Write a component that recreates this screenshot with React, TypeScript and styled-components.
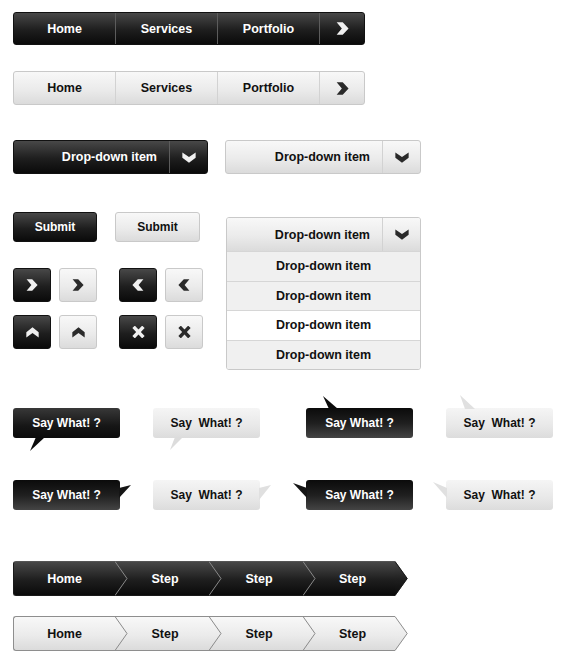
import React from "react";
import styled, { createGlobalStyle, css } from "styled-components";

const GlobalStyle = createGlobalStyle`
  html, body { margin: 0; padding: 0; background: #fff; }
  body { font-family: "Liberation Sans", Arial, sans-serif; }
`;

type Tone = "dark" | "light";

const darkBg = "linear-gradient(to bottom, #484848 0%, #1e1e1e 55%, #0a0a0a 100%)";
const lightBg = "linear-gradient(to bottom, #f8f8f8 0%, #ebebeb 55%, #dbdbdb 100%)";

const toneCss = (tone: Tone) =>
  tone === "dark"
    ? css`
        background: ${darkBg};
        color: #fff;
        border: 1px solid #111;
      `
    : css`
        background: ${lightBg};
        color: #111;
        border: 1px solid #c9c9c9;
      `;

const divider = (tone: Tone) => (tone === "dark" ? "#5c5c5c" : "#d2d2d2");
const iconColor = (tone: Tone) => (tone === "dark" ? "#f0f0f0" : "#2a2a2a");

const Page = styled.div`
  width: 564px;
  box-sizing: border-box;
  padding: 12px 0 12px 13px;
  display: flex;
  flex-direction: column;
`;

/* ---------- nav bars ---------- */
const NavBar = styled.nav<{ $tone: Tone; $top: number }>`
  display: flex;
  width: 352px;
  height: ${(p) => (p.$tone === "dark" ? 33 : 34)}px;
  margin-top: ${(p) => p.$top}px;
  box-sizing: border-box;
  border-radius: 3px;
  overflow: hidden;
  ${(p) => toneCss(p.$tone)}
`;

const NavItem = styled.div<{ $tone: Tone }>`
  width: 102px;
  box-sizing: border-box;
  border-right: 1px solid ${(p) => divider(p.$tone)};
  display: flex;
  align-items: center;
  justify-content: center;
  font-weight: bold;
  font-size: 12.5px;
`;

const NavArrow = styled.div`
  flex: 1;
  display: flex;
  align-items: center;
  justify-content: center;
`;

/* ---------- icons ---------- */
const rotations = { right: 0, down: 90, left: 180, up: 270 };

const Chevron = ({
  dir,
  color,
  w = 12,
  h = 12,
}: {
  dir: "right" | "down" | "left" | "up";
  color: string;
  w?: number;
  h?: number;
}) => (
  <svg width={w} height={h} viewBox="0 0 12 12" preserveAspectRatio="none">
    <polygon
      points="0.6,0.3 6.2,0.3 11.6,6 6.2,11.7 0.6,11.7 5.4,6"
      fill={color}
      transform={`rotate(${rotations[dir]} 6 6)`}
    />
  </svg>
);

const Cross = ({ color }: { color: string }) => (
  <svg width={13} height={12} viewBox="0 0 13 12">
    <path d="M1.6 0.8 L11.4 11.2 M11.4 0.8 L1.6 11.2" stroke={color} strokeWidth={3.4} fill="none" />
  </svg>
);

/* ---------- dropdowns ---------- */
const DropRow = styled.div`
  display: flex;
  gap: 17px;
  margin-top: 35px;
`;

const Select = styled.div<{ $tone: Tone; $w: number }>`
  display: flex;
  width: ${(p) => p.$w}px;
  height: 34px;
  box-sizing: border-box;
  border-radius: 3px;
  overflow: hidden;
  ${(p) => toneCss(p.$tone)}
`;

const SelectLabel = styled.div`
  flex: 1;
  display: flex;
  align-items: center;
  justify-content: flex-end;
  padding-right: 12px;
  font-weight: bold;
  font-size: 12.5px;
`;

const SelectButton = styled.div<{ $tone: Tone }>`
  width: 38px;
  box-sizing: border-box;
  border-left: 1px solid ${(p) => divider(p.$tone)};
  display: flex;
  align-items: center;
  justify-content: center;
`;

/* ---------- middle ---------- */
const Middle = styled.div`
  display: flex;
  margin-top: 38px;
`;

const LeftCol = styled.div`
  width: 191px;
  display: flex;
  flex-direction: column;
`;

const RightCol = styled.div`
  margin-left: 22px;
  padding-top: 5px;
`;

const SubmitRow = styled.div`
  display: flex;
  gap: 18px;
`;

const SubmitButton = styled.button<{ $tone: Tone }>`
  width: ${(p) => (p.$tone === "dark" ? 84 : 85)}px;
  height: 30px;
  box-sizing: border-box;
  border-radius: 3px;
  font-family: inherit;
  font-weight: bold;
  font-size: 12px;
  padding: 0;
  ${(p) => toneCss(p.$tone)}
`;

const IconGrid = styled.div`
  display: flex;
  flex-direction: column;
  gap: 13px;
  margin-top: 26px;
`;

const IconRow = styled.div`
  display: flex;
  gap: 22px;
`;

const IconPair = styled.div`
  display: flex;
  gap: 8px;
`;

const IconButton = styled.button<{ $tone: Tone }>`
  width: 38px;
  height: 34px;
  box-sizing: border-box;
  border-radius: 3px;
  padding: 0;
  display: flex;
  align-items: center;
  justify-content: center;
  ${(p) => toneCss(p.$tone)}
`;

const DropList = styled.div`
  width: 195px;
  box-sizing: border-box;
  border: 1px solid #c9c9c9;
  border-radius: 3px;
  overflow: hidden;
`;

const DropHeader = styled.div`
  display: flex;
  height: 33px;
  background: ${lightBg};
  color: #111;
`;

const DropItem = styled.div<{ $active?: boolean }>`
  height: 29.5px;
  box-sizing: border-box;
  border-top: 1px solid #d6d6d6;
  background: ${(p) => (p.$active ? "#fff" : "#f0f0f0")};
  display: flex;
  align-items: center;
  justify-content: center;
  font-weight: bold;
  font-size: 12.5px;
  color: #111;
`;

/* ---------- speech bubbles ---------- */
const BubbleRow = styled.div<{ $top: number }>`
  display: flex;
  gap: 46px;
  margin-top: ${(p) => p.$top}px;
`;

const BubblePair = styled.div`
  display: flex;
  gap: 33px;
`;

const Bubble = styled.div<{ $tone: Tone; $invert?: boolean }>`
  position: relative;
  width: 107px;
  height: 30px;
  box-sizing: border-box;
  border-radius: 3px;
  display: flex;
  align-items: center;
  justify-content: center;
  font-weight: bold;
  font-size: 12px;
  white-space: pre;
  ${(p) =>
    p.$tone === "dark"
      ? css`
          color: #fff;
          background: ${p.$invert
            ? "linear-gradient(to bottom, #0b0b0b 0%, #1f1f1f 50%, #444 100%)"
            : "linear-gradient(to bottom, #383838 0%, #161616 60%, #0b0b0b 100%)"};
        `
      : css`
          color: #111;
          background: linear-gradient(to bottom, #f5f5f5 0%, #e8e8e8 60%, #dcdcdc 100%);
        `}
`;

const Tail = styled.svg`
  position: absolute;
  left: 0;
  top: 0;
  overflow: visible;
  pointer-events: none;
`;

const SpeechBubble = ({
  tone,
  invert,
  text,
  tail,
  tailColor,
}: {
  tone: Tone;
  invert?: boolean;
  text: string;
  tail: string;
  tailColor: string;
}) => (
  <Bubble $tone={tone} $invert={invert}>
    <Tail width={107} height={30} viewBox="0 0 107 30">
      <polygon points={tail} fill={tailColor} />
    </Tail>
    {text}
  </Bubble>
);

/* ---------- steps ---------- */
const StepTrack = styled.div<{ $top: number }>`
  display: flex;
  margin-top: ${(p) => p.$top}px;
`;

const StepBody = styled.div<{ $tone: Tone }>`
  display: flex;
  width: 382px;
  height: 35px;
  box-sizing: border-box;
  border-radius: 3px 0 0 3px;
  ${(p) =>
    p.$tone === "dark"
      ? css`
          background: ${darkBg};
          color: #fff;
          border: 1px solid #1a1a1a;
          border-top-color: #555;
        `
      : css`
          background: ${lightBg};
          color: #111;
          border: 1px solid #8e8e8e;
        `}
  border-right: none;
`;

const StepSeg = styled.div<{ $w: number; $shift?: number }>`
  width: ${(p) => p.$w}px;
  flex-shrink: 0;
  box-sizing: border-box;
  padding-right: ${(p) => p.$shift ?? 0}px;
  display: flex;
  align-items: center;
  justify-content: center;
  font-weight: bold;
  font-size: 12.5px;
`;

const StepSepSvg = styled.svg`
  flex-shrink: 0;
  display: block;
  margin-top: -1px;
`;

const StepSep = ({ color }: { color: string }) => (
  <StepSepSvg width={13} height={35} viewBox="0 0 13 35">
    <polyline points="0,0.5 12,17.5 0,34.5" fill="none" stroke={color} strokeWidth={1} />
  </StepSepSvg>
);

const StepTip = ({ tone }: { tone: Tone }) => {
  const id = `tipgrad-${tone}`;
  const stops =
    tone === "dark"
      ? ["#484848", "#1e1e1e", "#0a0a0a"]
      : ["#f8f8f8", "#ebebeb", "#dbdbdb"];
  const stroke = tone === "dark" ? "#1a1a1a" : "#8e8e8e";
  return (
    <svg width={13} height={35} viewBox="0 0 13 35" style={{ display: "block", flexShrink: 0 }}>
      <defs>
        <linearGradient id={id} x1="0" y1="0" x2="0" y2="1">
          <stop offset="0" stopColor={stops[0]} />
          <stop offset="0.55" stopColor={stops[1]} />
          <stop offset="1" stopColor={stops[2]} />
        </linearGradient>
      </defs>
      <polygon points="0,0 12.5,17.5 0,35" fill={`url(#${id})`} />
      <polyline points="0,0.5 12.2,17.5 0,34.5" fill="none" stroke={stroke} strokeWidth={1} />
    </svg>
  );
};

const Steps = ({ tone, top }: { tone: Tone; top: number }) => {
  const sep = "#8a8a8a";
  return (
    <StepTrack $top={top}>
      <StepBody $tone={tone}>
        <StepSeg $w={101}>Home</StepSeg>
        <StepSep color={sep} />
        <StepSeg $w={81} $shift={7}>Step</StepSeg>
        <StepSep color={sep} />
        <StepSeg $w={81} $shift={7}>Step</StepSeg>
        <StepSep color={sep} />
        <StepSeg $w={81} $shift={8}>Step</StepSeg>
      </StepBody>
      <StepTip tone={tone} />
    </StepTrack>
  );
};

const Nav = ({ tone, top }: { tone: Tone; top: number }) => (
  <NavBar $tone={tone} $top={top}>
    <NavItem $tone={tone}>Home</NavItem>
    <NavItem $tone={tone}>Services</NavItem>
    <NavItem $tone={tone}>Portfolio</NavItem>
    <NavArrow>
      <Chevron dir="right" color={iconColor(tone)} w={13} h={13} />
    </NavArrow>
  </NavBar>
);

const Dropdown = ({ tone, w }: { tone: Tone; w: number }) => (
  <Select $tone={tone} $w={w}>
    <SelectLabel>Drop-down item</SelectLabel>
    <SelectButton $tone={tone}>
      <Chevron dir="down" color={iconColor(tone)} w={14} h={11} />
    </SelectButton>
  </Select>
);

export default function App() {
  return (
    <>
      <GlobalStyle />
      <Page>
        <Nav tone="dark" top={0} />
        <Nav tone="light" top={26} />

        <DropRow>
          <Dropdown tone="dark" w={195} />
          <Dropdown tone="light" w={196} />
        </DropRow>

        <Middle>
          <LeftCol>
            <SubmitRow>
              <SubmitButton $tone="dark">Submit</SubmitButton>
              <SubmitButton $tone="light">Submit</SubmitButton>
            </SubmitRow>
            <IconGrid>
              <IconRow>
                <IconPair>
                  <IconButton $tone="dark">
                    <Chevron dir="right" color={iconColor("dark")} w={12} h={12} />
                  </IconButton>
                  <IconButton $tone="light">
                    <Chevron dir="right" color={iconColor("light")} w={12} h={12} />
                  </IconButton>
                </IconPair>
                <IconPair>
                  <IconButton $tone="dark">
                    <Chevron dir="left" color={iconColor("dark")} w={12} h={12} />
                  </IconButton>
                  <IconButton $tone="light">
                    <Chevron dir="left" color={iconColor("light")} w={12} h={12} />
                  </IconButton>
                </IconPair>
              </IconRow>
              <IconRow>
                <IconPair>
                  <IconButton $tone="dark">
                    <Chevron dir="up" color={iconColor("dark")} w={13} h={11} />
                  </IconButton>
                  <IconButton $tone="light">
                    <Chevron dir="up" color={iconColor("light")} w={13} h={11} />
                  </IconButton>
                </IconPair>
                <IconPair>
                  <IconButton $tone="dark">
                    <Cross color={iconColor("dark")} />
                  </IconButton>
                  <IconButton $tone="light">
                    <Cross color={iconColor("light")} />
                  </IconButton>
                </IconPair>
              </IconRow>
            </IconGrid>
          </LeftCol>
          <RightCol>
            <DropList>
              <DropHeader>
                <SelectLabel>Drop-down item</SelectLabel>
                <SelectButton $tone="light">
                  <Chevron dir="down" color={iconColor("light")} w={14} h={11} />
                </SelectButton>
              </DropHeader>
              <DropItem>Drop-down item</DropItem>
              <DropItem>Drop-down item</DropItem>
              <DropItem $active>Drop-down item</DropItem>
              <DropItem>Drop-down item</DropItem>
            </DropList>
          </RightCol>
        </Middle>

        <BubbleRow $top={38}>
          <BubblePair>
            <SpeechBubble tone="dark" text="Say What! ?" tail="23,29 32,29 17,43" tailColor="#0b0b0b" />
            <SpeechBubble tone="light" text={"Say  What! ?"} tail="22,29 30,29 17,42" tailColor="#dcdcdc" />
          </BubblePair>
          <BubblePair>
            <SpeechBubble tone="dark" invert text="Say What! ?" tail="23,1 32,1 17,-12" tailColor="#0b0b0b" />
            <SpeechBubble tone="light" text={"Say  What! ?"} tail="19,1 29,1 14,-13" tailColor="#e0e0e0" />
          </BubblePair>
        </BubbleRow>

        <BubbleRow $top={42}>
          <BubblePair>
            <SpeechBubble tone="dark" invert text="Say What! ?" tail="106,8 106,18 118,5" tailColor="#151515" />
            <SpeechBubble tone="light" text={"Say  What! ?"} tail="106,8 106,20 118,5" tailColor="#e0e0e0" />
          </BubblePair>
          <BubblePair>
            <SpeechBubble tone="dark" invert text="Say What! ?" tail="1,8 1,18 -13,3" tailColor="#151515" />
            <SpeechBubble tone="light" text={"Say  What! ?"} tail="1,8 1,18 -13,2" tailColor="#e0e0e0" />
          </BubblePair>
        </BubbleRow>

        <Steps tone="dark" top={51} />
        <Steps tone="light" top={20} />
      </Page>
    </>
  );
}
